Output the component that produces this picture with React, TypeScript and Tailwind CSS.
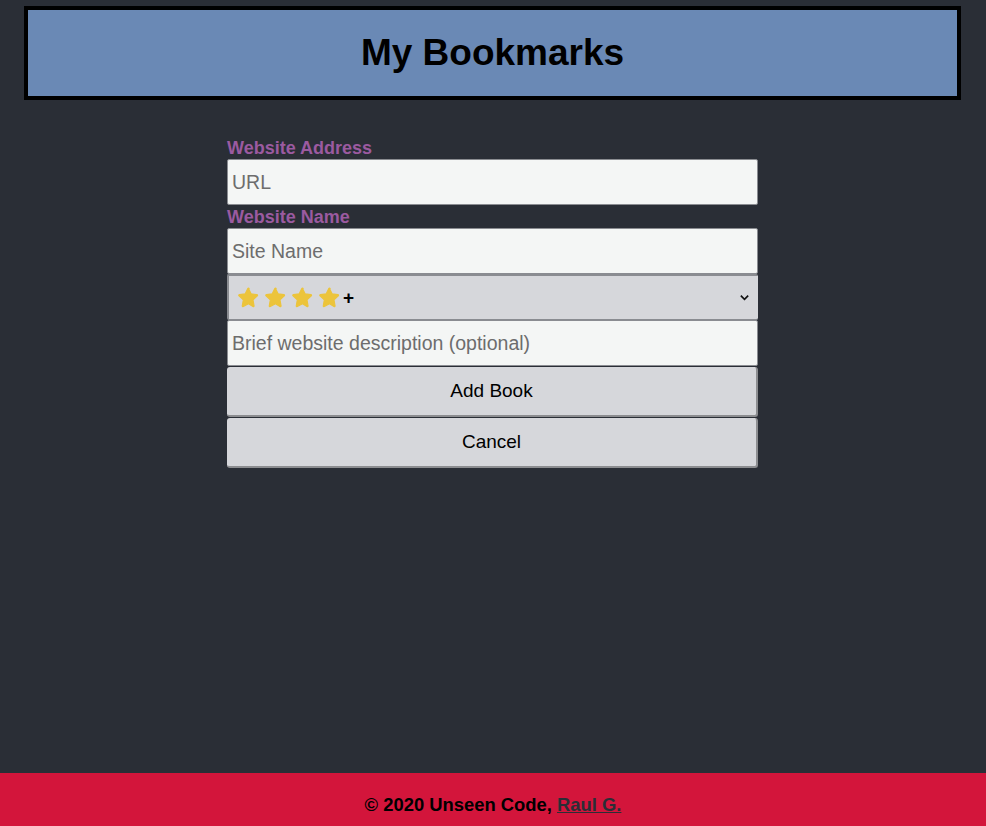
import { useState } from 'react';

function Star() {
  return (
    <svg viewBox="0 0 24 24" className="w-[23px] h-[23px]" aria-hidden="true">
      <path
        d="M12 2.6l2.7 5.6 6.1.8c.6.1.9.9.4 1.3l-4.5 4.2 1.1 6.1c.1.6-.6 1.1-1.1.8L12 18.5l-5.4 2.9c-.6.3-1.2-.2-1.1-.8l1.1-6.1-4.5-4.2c-.5-.4-.2-1.2.4-1.3l6.1-.8L11.3 2.6c.3-.6 1.1-.6 1.4 0z"
        fill="#ecc43b"
        stroke="#ecc43b"
        strokeWidth="1.2"
        strokeLinejoin="round"
      />
    </svg>
  );
}

export default function App() {
  const [url, setUrl] = useState('');
  const [name, setName] = useState('');
  const [desc, setDesc] = useState('');

  const field =
    'w-full h-[46px] px-[4px] bg-[#f4f6f5] border border-[#8a8c91] rounded-[2px] text-[19.5px] text-black placeholder:text-[#6d6d6d] outline-none';
  const button =
    'w-full h-[50px] bg-[#d6d7db] border-0 border-b-2 border-r-2 border-[#8c8d90] rounded-[3px] text-[19px] text-black';

  return (
    <div className="min-h-[826px] flex flex-col bg-[#2a2e36] font-['Liberation_Sans',Arial,sans-serif]">
      <header className="mt-[6px] mx-[24px] w-[937px] h-[94px] border-4 border-black bg-[#6a89b5] flex items-center justify-center">
        <h1 className="text-[37px] font-bold text-black">My Bookmarks</h1>
      </header>

      <main className="flex-1 flex justify-center pt-[38px] pr-[1px]">
        <form className="w-[531px] flex flex-col" onSubmit={e => e.preventDefault()}>
          <label className="text-[18px] font-bold text-[#9b5aa0] leading-[21px]">Website Address</label>
          <input className={field} placeholder="URL" value={url} onChange={e => setUrl(e.target.value)} />
          <label className="mt-[2px] text-[18px] font-bold text-[#9b5aa0] leading-[21px]">Website Name</label>
          <input className={field} placeholder="Site Name" value={name} onChange={e => setName(e.target.value)} />

          <div className="relative h-[46px] bg-[#d6d7db] border-t-2 border-l-2 border-b border-[#8a8c91] rounded-[2px] flex items-center pl-[8px]">
            <div className="flex items-center gap-[4px]">
              <Star />
              <Star />
              <Star />
              <Star />
            </div>
            <span className="ml-[2px] text-[19px] font-bold text-black leading-none">+</span>
            <svg viewBox="0 0 12 12" className="absolute right-[8px] w-[11px] h-[11px]" aria-hidden="true">
              <path d="M2 4l4 4 4-4" fill="none" stroke="#111" strokeWidth="1.8" />
            </svg>
          </div>

          <input className={field} placeholder="Brief website description (optional)" value={desc} onChange={e => setDesc(e.target.value)} />

          <button type="submit" className={`${button} mt-[1px]`}>Add Book</button>
          <button type="button" className={`${button} mt-[1px]`}>Cancel</button>
        </form>
      </main>

      <footer className="h-[53px] bg-[#d3153b] flex items-center justify-center pt-[10px]">
        <p className="text-[18.4px] font-bold text-black">
          © 2020 Unseen Code, <a href="#" className="underline text-[#2a2e36]">Raul G.</a>
        </p>
      </footer>
    </div>
  );
}
